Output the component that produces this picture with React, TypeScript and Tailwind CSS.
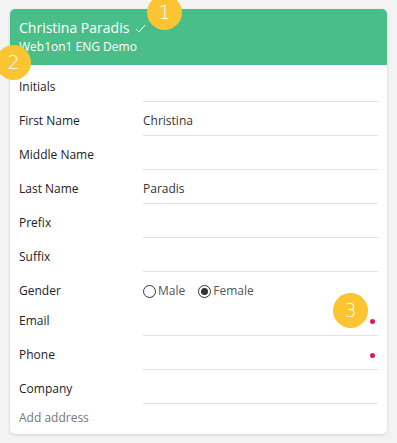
import React from "react";

const font = { fontFamily: '"Open Sans", "Noto Sans", sans-serif' };

function Badge({ n, className }: { n: string; className: string }) {
  return (
    <div
      className={`absolute w-[35px] h-[35px] rounded-full bg-[#fbc531] text-white flex items-center justify-center text-[19px] font-extralight z-10 ${className}`}
      style={{ fontFamily: '"DejaVu Sans", sans-serif' }}
    >
      {n}
    </div>
  );
}

function Row({ label, value, dot }: { label: string; value?: string; dot?: boolean }) {
  return (
    <div className="flex h-[34px]">
      <div className="w-[124px] shrink-0 pt-[10px] text-[12px] text-[#222]">{label}</div>
      <div className="flex-1 border-b border-[#e0e0e0] pt-[10px] text-[12px] text-[#333] relative">
        {value}
        {dot && <span className="absolute right-[3px] top-[17px] w-[5px] h-[5px] rounded-full bg-[#d81b60]" />}
      </div>
    </div>
  );
}

export default function App() {
  return (
    <div className="w-[397px] h-[443px] bg-[#f3f3f3] relative overflow-hidden" style={font}>
      <div className="absolute left-0 top-0 w-full h-full pt-[9px] px-[10px]">
        <div className="bg-white rounded-[5px] shadow-[0_1px_3px_rgba(0,0,0,0.15)] overflow-hidden">
          <div className="bg-[#49be89] h-[56px] px-[9px] pt-[9px] text-white">
            <div className="flex items-center text-[14px] leading-[20px]">
              Christina Paradis
              <svg width="11" height="9" viewBox="0 0 11 9" className="ml-[6px] mt-[1px]" fill="none" stroke="white" strokeWidth="1">
                <path d="M1 5 L4 8 L10 1" />
              </svg>
            </div>
            <div className="text-[12px] leading-[18px]">Web1on1 ENG Demo</div>
          </div>
          <div className="px-[9px] pt-[3px] pb-[8px]">
            <Row label="Initials" />
            <Row label="First Name" value="Christina" />
            <Row label="Middle Name" />
            <Row label="Last Name" value="Paradis" />
            <Row label="Prefix" />
            <Row label="Suffix" />
            <div className="flex h-[30px]">
              <div className="w-[124px] shrink-0 pt-[10px] text-[12px] text-[#222]">Gender</div>
              <div className="flex items-start pt-[10px] text-[12px] text-[#555]">
                <span className="flex items-center">
                  <span className="w-[13px] h-[13px] rounded-full border border-[#333] mr-[2px]" />
                  Male
                </span>
                <span className="flex items-center ml-[13px]">
                  <span className="w-[13px] h-[13px] rounded-full border border-[#333] mr-[2px] flex items-center justify-center">
                    <span className="w-[7px] h-[7px] rounded-full bg-[#333]" />
                  </span>
                  Female
                </span>
              </div>
            </div>
            <Row label="Email" dot />
            <Row label="Phone" dot />
            <Row label="Company" />
            <div className="pt-[5px] text-[12px] text-[#777] leading-[17px]">Add address</div>
          </div>
        </div>
      </div>
      <Badge n="1" className="left-[147px] top-[-5px]" />
      <Badge n="2" className="left-[-4px] top-[45px]" />
      <Badge n="3" className="left-[333px] top-[293px]" />
    </div>
  );
}
